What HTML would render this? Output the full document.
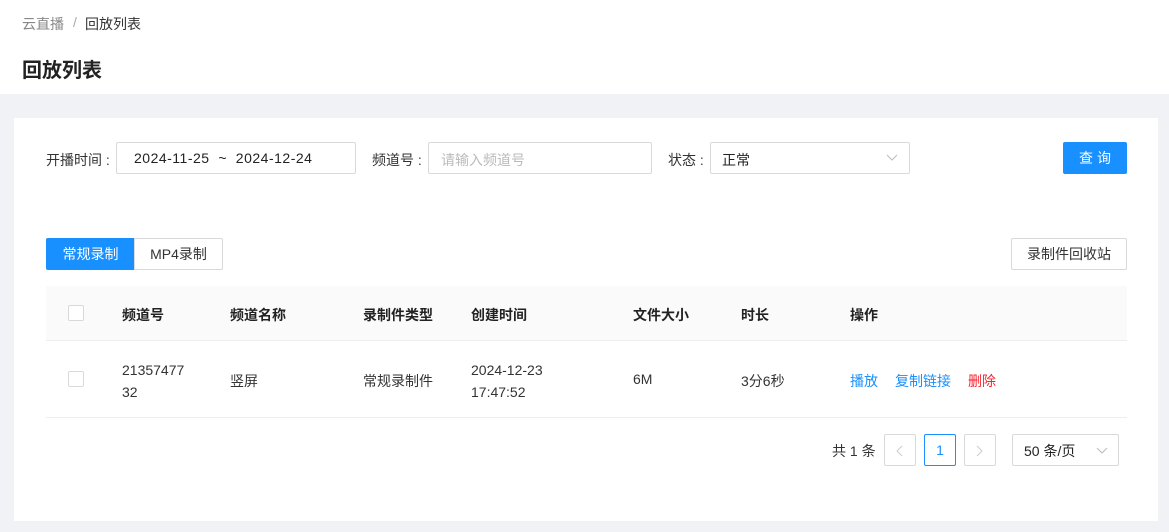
<!DOCTYPE html>
<html><head><meta charset="utf-8"><style>
*{box-sizing:border-box;margin:0;padding:0}
body{width:1169px;height:532px;background:#f0f2f5;font-family:"Liberation Sans","Noto Sans CJK SC",sans-serif;font-size:14px;color:#333;position:relative;overflow:hidden}
.a{position:absolute;white-space:nowrap}
.hdr{position:absolute;left:0;top:0;width:1169px;height:94px;background:#fff}
.card{position:absolute;left:14px;top:118px;width:1144px;height:403px;background:#fff}
.box{position:absolute;border:1px solid #d9d9d9;border-radius:2px;background:#fff}
.chk{position:absolute;width:16px;height:16px;border:1px solid #d9d9d9;border-radius:2px;background:#fff}
</style></head><body>
<div class="hdr"></div>
<div class="a" style="left:22px;top:14px;color:#888">云直播</div>
<div class="a" style="left:73px;top:14px;color:#aaa">/</div>
<div class="a" style="left:85px;top:14px;color:#333">回放列表</div>
<div class="a" style="left:22px;top:54px;font-size:20px;font-weight:bold;color:#222">回放列表</div>
<div class="card"></div>
<div class="a" style="left:46px;top:150px">开播时间 :</div>
<div class="box" style="left:116px;top:142px;width:240px;height:32px"></div>
<div class="a" style="left:134px;top:150px;color:#222;letter-spacing:0.5px">2024-11-25 &nbsp;~ &nbsp;2024-12-24</div>
<div class="a" style="left:372px;top:150px">频道号 :</div>
<div class="box" style="left:428px;top:142px;width:224px;height:32px"></div>
<div class="a" style="left:441px;top:150px;color:#bbb">请输入频道号</div>
<div class="a" style="left:668px;top:150px">状态 :</div>
<div class="box" style="left:710px;top:142px;width:200px;height:32px"></div>
<div class="a" style="left:722px;top:150px;color:#222">正常</div>
<svg class="a" style="left:886px;top:154px" width="12" height="8"><path d="M1 1L6 6L11 1" stroke="#bbb" fill="none"/></svg>
<div class="a" style="left:1063px;top:142px;width:64px;height:32px;background:#1890ff;border-radius:2px;color:#fff;text-align:center;line-height:32px;letter-spacing:4px;padding-left:4px">查询</div>
<div class="a" style="left:46px;top:238px;width:89px;height:32px;background:#1890ff;color:#fff;text-align:center;line-height:32px;border-radius:2px 0 0 2px">常规录制</div>
<div class="box" style="left:134px;top:238px;width:89px;height:32px;text-align:center;line-height:30px;border-radius:0 2px 2px 0">MP4录制</div>
<div class="box" style="left:1011px;top:238px;width:116px;height:32px;text-align:center;line-height:30px">录制件回收站</div>
<div class="a" style="left:46px;top:286px;width:1081px;height:55px;background:#fafafa;border-bottom:1px solid #eee"></div>
<div class="chk" style="left:68px;top:305px"></div>
<div class="a" style="left:122px;top:305px;font-weight:bold;color:#222">频道号</div>
<div class="a" style="left:230px;top:305px;font-weight:bold;color:#222">频道名称</div>
<div class="a" style="left:363px;top:305px;font-weight:bold;color:#222">录制件类型</div>
<div class="a" style="left:471px;top:305px;font-weight:bold;color:#222">创建时间</div>
<div class="a" style="left:633px;top:305px;font-weight:bold;color:#222">文件大小</div>
<div class="a" style="left:741px;top:305px;font-weight:bold;color:#222">时长</div>
<div class="a" style="left:850px;top:305px;font-weight:bold;color:#222">操作</div>
<div class="a" style="left:46px;top:417px;width:1081px;height:1px;background:#eee"></div>
<div class="chk" style="left:68px;top:371px"></div>
<div class="a" style="left:122px;top:359px;line-height:22px">21357477<br>32</div>
<div class="a" style="left:230px;top:371px">竖屏</div>
<div class="a" style="left:363px;top:371px">常规录制件</div>
<div class="a" style="left:471px;top:359px;line-height:22px">2024-12-23<br>17:47:52</div>
<div class="a" style="left:633px;top:371px">6M</div>
<div class="a" style="left:741px;top:371px">3分6秒</div>
<div class="a" style="left:850px;top:371px;color:#1890ff">播放</div>
<div class="a" style="left:895px;top:371px;color:#1890ff">复制链接</div>
<div class="a" style="left:968px;top:371px;color:#f5222d">删除</div>
<div class="a" style="left:832px;top:441px">共 1 条</div>
<div class="box" style="left:884px;top:434px;width:32px;height:32px"></div>
<svg class="a" style="left:896px;top:445px" width="8" height="12"><path d="M6 1L1 6L6 11" stroke="#ccc" fill="none"/></svg>
<div class="box" style="left:924px;top:434px;width:32px;height:32px;border-color:#1890ff;color:#1890ff;text-align:center;line-height:30px">1</div>
<div class="box" style="left:964px;top:434px;width:32px;height:32px"></div>
<svg class="a" style="left:976px;top:445px" width="8" height="12"><path d="M1 1L6 6L1 11" stroke="#ccc" fill="none"/></svg>
<div class="box" style="left:1012px;top:434px;width:107px;height:32px"></div>
<div class="a" style="left:1024px;top:441px;color:#222">50 条/页</div>
<svg class="a" style="left:1096px;top:447px" width="12" height="8"><path d="M1 1L6 6L11 1" stroke="#bbb" fill="none"/></svg>
</body></html>
